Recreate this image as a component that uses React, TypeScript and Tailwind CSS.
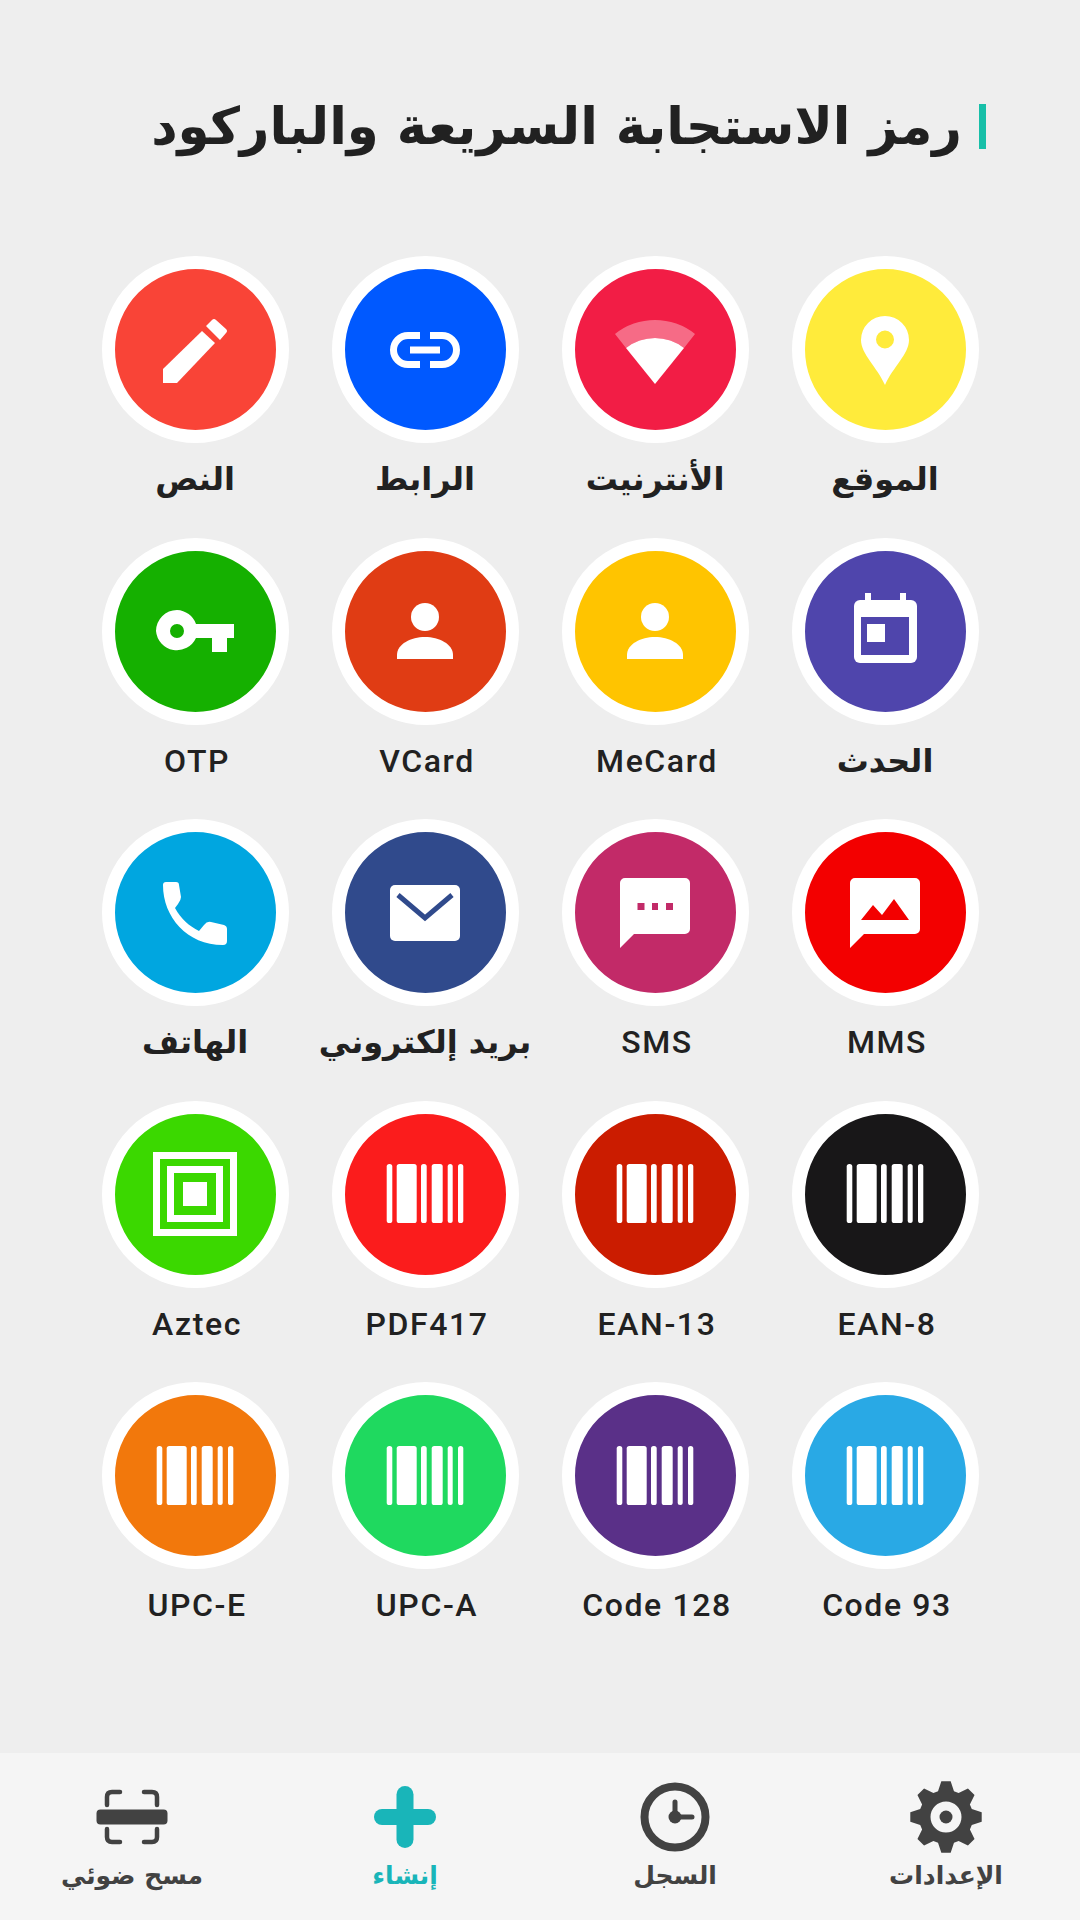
import type { ReactNode } from 'react';

type Tile = { label: string; color: string; latin?: boolean; icon: ReactNode };

const Glyph = ({ children }: { children: ReactNode }) => (
  <svg viewBox="-50 -50 100 100" className="w-[100px] h-[100px]" fill="white">
    {children}
  </svg>
);

const Barcode = () => (
  <Glyph>
    <rect x="-38.3" y="-30" width="5.6" height="59" rx="2.6" />
    <rect x="-28.3" y="-30" width="20" height="59" rx="2.6" />
    <rect x="-4" y="-30" width="5.7" height="59" rx="2.6" />
    <rect x="6.7" y="-30" width="11" height="59" rx="2.6" />
    <rect x="22.7" y="-30" width="5" height="59" rx="2.5" />
    <rect x="33" y="-30" width="5.3" height="59" rx="2.6" />
  </Glyph>
);

const Person = () => (
  <Glyph>
    <circle cx="0" cy="-14" r="14" />
    <path d="M-28 28V24C-28 13-14 6 0 6S28 13 28 24V28Z" />
  </Glyph>
);

const Bubble = ({ children }: { children: ReactNode }) => (
  <Glyph>
    <path d="M-30 -35H30A5 5 0 0 1 35 -30V16A5 5 0 0 1 30 21H-21L-35 35V-30A5 5 0 0 1 -30 -35Z" />
    {children}
  </Glyph>
);

const tiles: Tile[] = [
  {
    label: 'الموقع',
    color: 'bg-[#ffeb3b]',
    icon: (
      <Glyph>
        <path
          fillRule="evenodd"
          d="M0 35C-8 17-24 4-24 -10A24 24 0 0 1 24 -10C24 4 8 17 0 35ZM0 -19.5A9 9 0 1 0 0 -1.5A9 9 0 1 0 0 -19.5Z"
        />
      </Glyph>
    ),
  },
  {
    label: 'الأنترنيت',
    color: 'bg-[#f21d45]',
    icon: (
      <Glyph>
        <path opacity="0.35" d="M-40 -16A64 64 0 0 1 40 -16L29 -2A47 47 0 0 0 -29 -2Z" />
        <path d="M0 34L-29 -2A47 47 0 0 1 29 -2Z" />
      </Glyph>
    ),
  },
  {
    label: 'الرابط',
    color: 'bg-[#0059ff]',
    icon: (
      <Glyph>
        <path d="M-5 -18H-17A18 18 0 0 0 -17 18H-5V11H-17A11 11 0 0 1 -17 -11H-5Z" />
        <path d="M5 -18H17A18 18 0 0 1 17 18H5V11H17A11 11 0 0 0 17 -11H5Z" />
        <rect x="-15" y="-3.5" width="30" height="7" />
      </Glyph>
    ),
  },
  {
    label: 'النص',
    color: 'bg-[#f94437]',
    icon: (
      <Glyph>
        <path d="M-32 19L7 -19L20 -7L-18 33H-32Z" />
        <path d="M11 -24L17 -30Q19 -32 21 -30L31 -21Q33 -19 31 -17L25 -10Z" />
      </Glyph>
    ),
  },
  {
    label: 'الحدث',
    color: 'bg-[#4f45ac]',
    icon: (
      <Glyph>
        <rect x="-20" y="-38" width="6" height="10" />
        <rect x="15" y="-38" width="6" height="10" />
        <rect x="-31" y="-31" width="63" height="63" rx="6" />
        <rect x="-24" y="-14" width="48" height="38" fill="#4f45ac" />
        <rect x="-18" y="-7" width="18" height="18" />
      </Glyph>
    ),
  },
  { label: 'MeCard', latin: true, color: 'bg-[#ffc400]', icon: <Person /> },
  { label: 'VCard', latin: true, color: 'bg-[#e03c14]', icon: <Person /> },
  {
    label: 'OTP',
    latin: true,
    color: 'bg-[#15b000]',
    icon: (
      <Glyph>
        <path
          fillRule="evenodd"
          d="M-18 -21A21 21 0 0 1 1 -7H39V7H32V21H17V7H1A21 21 0 0 1 -39 0A21 21 0 0 1 -18 -21ZM-18 -7A7 7 0 1 0 -18 7A7 7 0 1 0 -18 -7Z"
        />
      </Glyph>
    ),
  },
  {
    label: 'MMS',
    latin: true,
    color: 'bg-[#f30000]',
    icon: (
      <Bubble>
        <path d="M-24 7L-12 -8L-3 2L9 -14L24 7Z" fill="#f30000" />
      </Bubble>
    ),
  },
  {
    label: 'SMS',
    latin: true,
    color: 'bg-[#c22a68]',
    icon: (
      <Bubble>
        <g fill="#c22a68">
          <rect x="-17.5" y="-10" width="7" height="7" />
          <rect x="-3" y="-10" width="6" height="7" />
          <rect x="11" y="-10" width="7" height="7" />
        </g>
      </Bubble>
    ),
  },
  {
    label: 'بريد إلكتروني',
    color: 'bg-[#304a8c]',
    icon: (
      <Glyph>
        <rect x="-35" y="-28" width="70" height="56" rx="5" />
        <path d="M-27 -18L0 5L27 -18" fill="none" stroke="#304a8c" strokeWidth="5" />
      </Glyph>
    ),
  },
  {
    label: 'الهاتف',
    color: 'bg-[#00a6e0]',
    icon: (
      <Glyph>
        <path d="M-29 -31H-19Q-16 -31 -16 -28L-14 -16Q-14 -13 -17 -9L-20 -5C-14 6-6 13 4 18L9 12Q12 8 16 9L29 12Q32 13 32 16V28Q32 32 28 32C-8 32-32 4-32 -28Q-32 -31-29 -31Z" />
      </Glyph>
    ),
  },
  { label: 'EAN-8', latin: true, color: 'bg-[#181718]', icon: <Barcode /> },
  { label: 'EAN-13', latin: true, color: 'bg-[#cb1c00]', icon: <Barcode /> },
  { label: 'PDF417', latin: true, color: 'bg-[#fb1c1c]', icon: <Barcode /> },
  {
    label: 'Aztec',
    latin: true,
    color: 'bg-[#3bd800]',
    icon: (
      <Glyph>
        <path
          fillRule="evenodd"
          d="M-42 -42H42V42H-42ZM-35 -35V35H35V-35ZM-28 -28H28V28H-28ZM-21 -21V21H21V-21ZM-12 -12H12V12H-12Z"
        />
      </Glyph>
    ),
  },
  { label: 'Code 93', latin: true, color: 'bg-[#29a9e5]', icon: <Barcode /> },
  { label: 'Code 128', latin: true, color: 'bg-[#5a3088]', icon: <Barcode /> },
  { label: 'UPC-A', latin: true, color: 'bg-[#1fd95f]', icon: <Barcode /> },
  { label: 'UPC-E', latin: true, color: 'bg-[#f2780c]', icon: <Barcode /> },
];

// eight-toothed cog outline, built once instead of typing 32 points
const gearPath = (() => {
  const pts: string[] = [];
  for (let i = 0; i < 8; i++) {
    const a = (i * Math.PI) / 4;
    const at = (r: number, off: number) => {
      const t = a + off;
      return `${(r * Math.sin(t)).toFixed(2)} ${(-r * Math.cos(t)).toFixed(2)}`;
    };
    pts.push(at(27, -0.3), at(36, -0.13), at(36, 0.13), at(27, 0.3));
  }
  return `M${pts.join('L')}Z`;
})();

const NavIcon = ({ children }: { children: ReactNode }) => (
  <svg viewBox="-40 -40 80 80" className="w-[80px] h-[80px]" fill="#424242">
    {children}
  </svg>
);

const Settings = () => (
  <NavIcon>
    <path fillRule="evenodd" d={`${gearPath}M0 -15.5A15.5 15.5 0 1 0 0 15.5A15.5 15.5 0 1 0 0 -15.5Z`} />
    <circle r="6.5" />
  </NavIcon>
);

const History = () => (
  <NavIcon>
    <circle r="30.5" fill="none" stroke="#424242" strokeWidth="8" />
    <circle r="6.5" />
    <path d="M0 -15V0H17" fill="none" stroke="#424242" strokeWidth="5" strokeLinecap="round" strokeLinejoin="round" />
  </NavIcon>
);

const Create = () => (
  <NavIcon>
    <rect x="-8.5" y="-31" width="17" height="62" rx="8.5" fill="#19b5b9" />
    <rect x="-31" y="-8" width="62" height="16" rx="8" fill="#19b5b9" />
  </NavIcon>
);

const Scan = () => (
  <NavIcon>
    <rect x="-35.5" y="-7.5" width="71" height="15" rx="4" />
    <g fill="none" stroke="#424242" strokeWidth="4.5" strokeLinecap="round">
      <path d="M-25 -12V-20Q-25 -25 -20 -25H-12" />
      <path d="M25 -12V-20Q25 -25 20 -25H12" />
      <path d="M-25 12V20Q-25 25 -20 25H-12" />
      <path d="M25 12V20Q25 25 20 25H12" />
    </g>
  </NavIcon>
);

const tabs = [
  { label: 'الإعدادات', icon: <Settings />, tone: 'text-[#424242]', cell: 'translate-x-[1px]' },
  { label: 'السجل', icon: <History />, tone: 'text-[#424242]', cell: '' },
  { label: 'إنشاء', icon: <Create />, tone: 'text-[#19b5b9]', cell: '' },
  { label: 'مسح ضوئي', icon: <Scan />, tone: 'text-[#424242]', cell: '-translate-x-[3px]' },
];

export default function App() {
  return (
    <div dir="rtl" className="w-[1080px] h-[1920px] bg-[#eeeeee] flex flex-col font-['DejaVu_Sans',sans-serif]">
      {/* Header */}
      <div className="flex items-center gap-[17px] pt-[104px] pr-[94px]">
        <span className="w-[7px] h-[45px] bg-[#17bfa8]"></span>
        <h1 className="text-[51.5px] leading-[45px] font-bold text-[#212121] whitespace-nowrap">
          رمز الاستجابة السريعة والباركود
        </h1>
      </div>

      {/* Code types */}
      <div className="grid grid-cols-[repeat(4,230px)] auto-rows-[281.5px] mt-[107px] mr-[80px]">
        {tiles.map((tile) => (
          <div key={tile.label} className="flex flex-col items-center">
            <div
              className={`w-[187px] h-[187px] rounded-full border-[13px] border-white flex items-center justify-center ${tile.color}`}
            >
              {tile.icon}
            </div>
            {tile.latin ? (
              <span className="mt-[14px] pl-[4px] text-[32px] leading-[44px] font-['Roboto',sans-serif] font-[480] tracking-[1.6px] text-[#212121] whitespace-nowrap">
                {tile.label}
              </span>
            ) : (
              <span className="mt-[14px] text-[32px] leading-[44px] font-bold text-[#212121] whitespace-nowrap">
                {tile.label}
              </span>
            )}
          </div>
        ))}
      </div>

      {/* Bottom navigation */}
      <div className="mt-auto h-[167px] bg-[#f5f5f5] grid grid-cols-4">
        {tabs.map((tab) => (
          <div key={tab.label} className={`flex flex-col items-center pt-[24px] ${tab.cell}`}>
            {tab.icon}
            <span className={`mt-[1px] text-[25px] leading-[36px] font-bold whitespace-nowrap ${tab.tone}`}>
              {tab.label}
            </span>
          </div>
        ))}
      </div>
    </div>
  );
}
